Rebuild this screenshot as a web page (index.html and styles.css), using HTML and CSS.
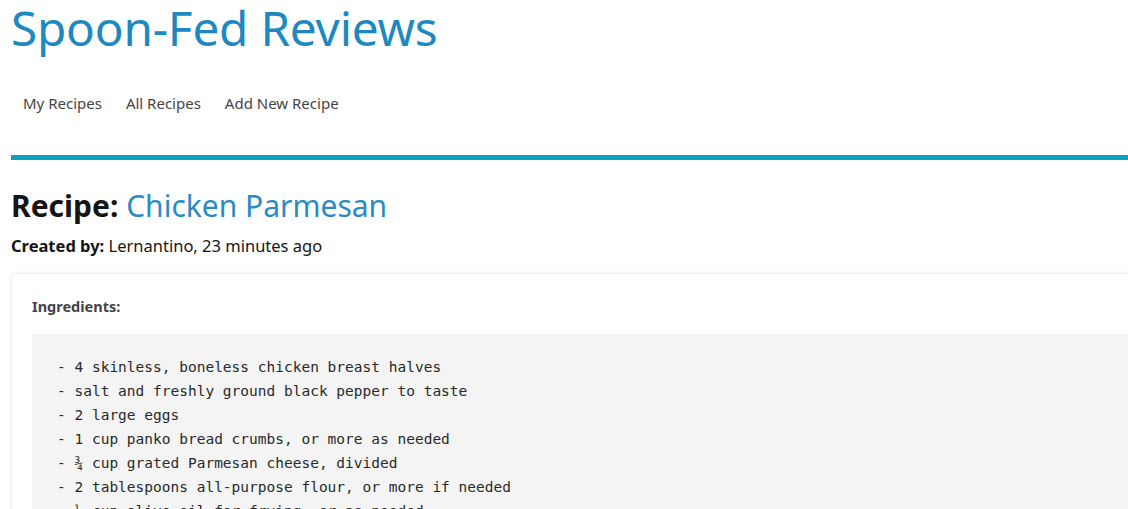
FILE: index.html
```html
<!DOCTYPE html>
<html>
<head>
<meta charset="utf-8">
<link rel="stylesheet" href="styles.css">
</head>
<body>
<div class="page">
  <header class="header">
    <h1 class="site-title">Spoon-Fed Reviews</h1>
    <nav class="nav">
      <a class="nav-link" href="#">My Recipes</a>
      <a class="nav-link" href="#">All Recipes</a>
      <a class="nav-link" href="#">Add New Recipe</a>
    </nav>
  </header>
  <main class="main">
    <h2 class="recipe-title"><strong>Recipe:</strong> <span class="recipe-name">Chicken Parmesan</span></h2>
    <p class="meta"><strong>Created by:</strong> Lernantino, 23 minutes ago</p>
    <section class="card">
      <h3 class="card-label">Ingredients:</h3>
      <pre class="ingredients">- 4 skinless, boneless chicken breast halves
- salt and freshly ground black pepper to taste
- 2 large eggs
- 1 cup panko bread crumbs, or more as needed
- ¾ cup grated Parmesan cheese, divided
- 2 tablespoons all-purpose flour, or more if needed
- ½ cup olive oil for frying, or as needed</pre>
    </section>
  </main>
</div>
</body>
</html>
```
FILE: styles.css
```css
html, body {
  margin: 0;
  padding: 0;
  overflow: hidden;
  background: #fff;
}
body {
  font-family: "Noto Sans", "Open Sans", sans-serif;
  color: #222;
}
.page {
  padding-left: 11px;
}
.header {
  border-bottom: 5px solid #0aa2b9;
}
.site-title {
  margin: 0;
  padding-top: 2px;
  font-size: 47.7px;
  font-weight: 400;
  line-height: 52px;
  color: #1e88c0;
  letter-spacing: -0.2px;
}
.nav {
  display: flex;
  padding: 38px 0 0 0;
  height: 101px;
  box-sizing: border-box;
}
.nav-link {
  padding: 0 12px;
  font-size: 15px;
  color: #444;
  text-decoration: none;
  line-height: 22px;
}
.main {
  padding-top: 26px;
}
.recipe-title {
  margin: 0;
  font-size: 30px;
  line-height: 40px;
  font-weight: 400;
  color: #151515;
}
.recipe-title strong {
  font-weight: 700;
}
.recipe-name {
  color: #2a8bc2;
}
.meta {
  margin: 9px 0 0 0;
  font-size: 16.5px;
  line-height: 22px;
  color: #151515;
}
.card {
  margin-top: 16px;
  margin-right: -30px;
  border: 1px solid #f0f0f0;
  border-radius: 5px;
  box-shadow: 0 1px 6px rgba(0,0,0,0.06);
  padding: 20px 0 0 20px;
}
.card-label {
  margin: 0 0 16px 0;
  font-size: 14.5px;
  line-height: 24px;
  font-weight: 700;
  color: #444;
}
.ingredients {
  margin: 0;
  background: #f4f4f4;
  padding: 21px 25px 20px;
  font-family: "DejaVu Sans Mono", "Liberation Mono", monospace;
  font-size: 14.5px;
  line-height: 24px;
  color: #2a2a2a;
}
```
